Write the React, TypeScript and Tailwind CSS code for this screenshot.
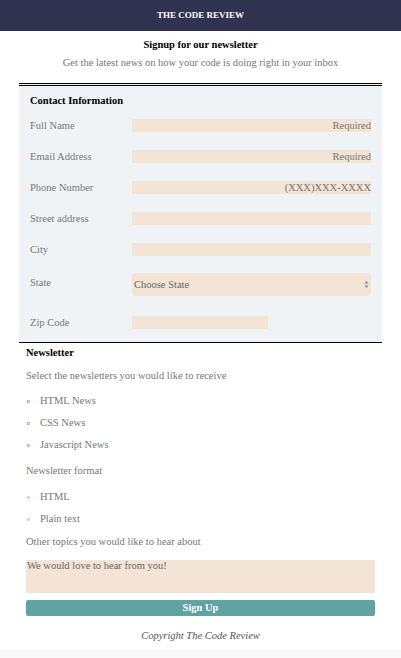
const fields = [
  { label: 'Full Name', placeholder: 'Required' },
  { label: 'Email Address', placeholder: 'Required' },
  { label: 'Phone Number', placeholder: '(XXX)XXX-XXXX' },
  { label: 'Street address', placeholder: '' },
  { label: 'City', placeholder: '' },
]

const newsletters = ['HTML News', 'CSS News', 'Javascript News']
const formats = ['HTML', 'Plain text']

export default function App() {
  return (
    <div className="min-h-[658px] bg-[#f9f9f9] font-['Liberation_Serif',serif] text-[10.5px]">
      <div className="h-[650px] bg-white">
        <header className="flex h-[31px] items-center justify-center bg-[#2f3350] text-[9px] font-bold text-white">
          THE CODE REVIEW
        </header>

        <div className="pt-[8px] text-center">
          <h1 className="text-[10.5px] leading-[12px] font-bold text-black">Signup for our newsletter</h1>
          <p className="mt-[6px] leading-[12px] text-[#777]">
            Get the latest news on how your code is doing right in your inbox
          </p>
        </div>

        <form className="mx-[19px] mt-[14px]">
          <fieldset className="border-t-[3px] border-double border-b border-b-black border-t-black bg-[#eff3f6] px-[11px] pt-[9px] pb-[13px]">
            <h2 className="leading-[12px] font-bold text-black">Contact Information</h2>

            <div className="mt-[12px] flex flex-col gap-[18px]">
              {fields.map((f) => (
                <div key={f.label} className="flex items-center">
                  <span className="w-[102px] text-[#777] leading-[13px]">{f.label}</span>
                  <div className="flex h-[13px] flex-1 items-center justify-end bg-[#f3e4d5] text-[#777]">
                    {f.placeholder}
                  </div>
                </div>
              ))}
            </div>

            <div className="mt-[17px] flex items-start">
              <span className="w-[102px] pt-[3px] text-[#777] leading-[13px]">State</span>
              <div className="flex h-[23px] flex-1 items-center justify-between rounded-[4px] bg-[#f3e4d5] pl-[2px] pr-[2px] text-[#666]">
                <span>Choose State</span>
                <svg width="5" height="9" viewBox="0 0 5 9">
                  <path d="M2.5 1 L4.5 3.5 H0.5 Z M2.5 8 L4.5 5.5 H0.5 Z" fill="#888" />
                </svg>
              </div>
            </div>

            <div className="mt-[20px] flex items-center">
              <span className="w-[102px] text-[#777] leading-[13px]">Zip Code</span>
              <div className="h-[13px] w-[136px] bg-[#f3e4d5]" />
            </div>
          </fieldset>
        </form>

        <div className="mx-[26px] mt-[4px] text-[#777]">
          <h2 className="leading-[12px] font-bold text-black">Newsletter</h2>
          <p className="mt-[11px] leading-[12px]">Select the newsletters you would like to receive</p>
          <ul className="mt-[13px] flex flex-col gap-[10px]">
            {newsletters.map((n) => (
              <li key={n} className="flex items-center leading-[12px]">
                <span className="ml-[1px] mr-[10px] h-[3px] w-[3px] border border-[#bbb] bg-[#eee]" />
                {n}
              </li>
            ))}
          </ul>
          <p className="mt-[14px] leading-[12px]">Newsletter format</p>
          <ul className="mt-[14px] flex flex-col gap-[10px]">
            {formats.map((n) => (
              <li key={n} className="flex items-center leading-[12px]">
                <span className="ml-[1px] mr-[10px] h-[3px] w-[3px] rounded-full border border-[#bbb] bg-[#eee]" />
                {n}
              </li>
            ))}
          </ul>
          <p className="mt-[11px] leading-[12px]">Other topics you would like to hear about</p>
          <div className="mt-[12px] h-[33px] bg-[#f3e4d5] px-[1px] leading-[12px] text-[#666]">
            We would love to hear from you!
          </div>
          <button
            type="button"
            className="mt-[7px] flex h-[16px] w-full items-center justify-center rounded-[2px] bg-[#5fa4a3] text-[10.5px] font-bold text-white"
          >
            Sign Up
          </button>
          <p className="mt-[12px] text-center italic text-[#555]">Copyright The Code Review</p>
        </div>
      </div>
    </div>
  )
}
